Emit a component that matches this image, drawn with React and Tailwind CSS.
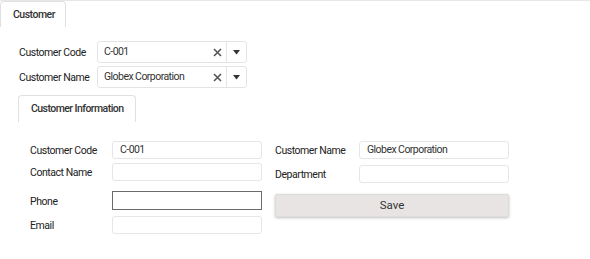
import React from "react";

const font = { fontFamily: "Roboto, 'Liberation Sans', sans-serif" };

const ComboField = ({ label, value }) => (
  <div className="flex items-center h-[22px]">
    <div className="w-[78px] pt-[1px] whitespace-nowrap text-[10.5px] tracking-[-0.45px] text-[#222]">{label}</div>
    <div className="flex h-[22px] w-[150px] border border-[#e4e4e4] rounded-[3px] bg-white">
      <div className="flex-1 flex items-center pl-[6px] whitespace-nowrap text-[10.5px] tracking-[-0.55px] text-[#333]">
        {value}
      </div>
      <div className="w-[18px] flex items-center justify-center">
        <svg width="9" height="9" viewBox="0 0 9 9">
          <path d="M1 1L8 8M8 1L1 8" stroke="#555" strokeWidth="1.6" />
        </svg>
      </div>
      <div className="w-[20px] flex items-center justify-center border-l border-[#e4e4e4]">
        <svg width="7" height="5" viewBox="0 0 7 5">
          <path d="M0 0H7L3.5 4.5Z" fill="#333" />
        </svg>
      </div>
    </div>
  </div>
);

const Field = ({ label, value, labelW, active, h = "h-[18px]" }) => (
  <div className="flex items-center">
    <div className={`${labelW} pt-[2px] whitespace-nowrap text-[10.5px] tracking-[-0.45px] text-[#222]`}>{label}</div>
    <div
      className={`w-[150px] ${h} flex items-center pl-[7px] whitespace-nowrap text-[10.5px] tracking-[-0.55px] text-[#333] bg-white ${
        active ? "border border-[#6b6b6b]" : "border border-[#e6e6e6] rounded-[3px]"
      }`}
    >
      {value}
    </div>
  </div>
);

export default function App() {
  return (
    <div className="w-[590px] h-[259px] bg-white border-t border-[#e8e8e8]" style={font}>
      <div className="flex">
        <div className="w-[66px] h-[26px] border border-b-0 border-[#e0e0e0] rounded-t-[4px] flex items-center pl-[12px] whitespace-nowrap text-[10.5px] tracking-[-0.5px] font-medium text-[#333]">
          Customer
        </div>
      </div>

      <div className="pl-[19px] pt-[14px] flex flex-col gap-[3px]">
        <ComboField label="Customer Code" value="C-001" />
        <ComboField label="Customer Name" value="Globex Corporation" />
      </div>

      <div className="pl-[18px] pt-[7px]">
        <div className="w-[118px] h-[27px] border border-b-0 border-[#e0e0e0] rounded-t-[4px] flex items-center pl-[12px] whitespace-nowrap text-[10.5px] tracking-[-0.55px] font-medium text-[#333]">
          Customer Information
        </div>
      </div>

      <div className="flex pl-[30px] pt-[18px] gap-[13px]">
        <div className="flex flex-col pt-[1px]">
          <Field label="Customer Code" value="C-001" labelW="w-[82px]" />
          <div className="h-[4px]" />
          <Field label="Contact Name" labelW="w-[82px]" />
          <div className="h-[10px]" />
          <Field label="Phone" labelW="w-[82px]" active h="h-[19px]" />
          <div className="h-[6px]" />
          <Field label="Email" labelW="w-[82px]" />
        </div>
        <div className="flex flex-col pt-[1px]">
          <Field label="Customer Name" value="Globex Corporation" labelW="w-[84px]" />
          <div className="h-[6px]" />
          <Field label="Department" labelW="w-[84px]" />
          <button className="mt-[11px] w-[234px] h-[23px] bg-[#e8e4e4] border border-[#dcdcdc] rounded-[2px] shadow-[0_1px_3px_rgba(0,0,0,0.25)] text-[11.5px] text-[#333]">
            Save
          </button>
        </div>
      </div>
    </div>
  );
}
